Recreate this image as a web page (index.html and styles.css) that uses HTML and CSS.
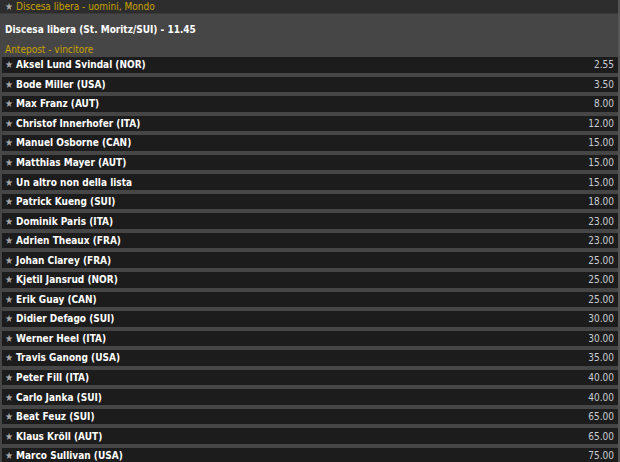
FILE: index.html
```html
<!DOCTYPE html>
<html lang="it">
<head>
<meta charset="utf-8">
<title>Discesa libera</title>
<link rel="stylesheet" href="styles.css">
</head>
<body>
<div class="page">
  <div class="crumb"><span class="star">★</span>Discesa libera - uomini, Mondo</div>
  <div class="event">Discesa libera (St. Moritz/SUI) - 11.45</div>
  <div class="market">Antepost - vincitore</div>
  <ul class="rows">
    <li class="row"><span class="name"><span class="star">★</span>Aksel Lund Svindal (NOR)</span><span class="odd">2.55</span></li>
    <li class="row"><span class="name"><span class="star">★</span>Bode Miller (USA)</span><span class="odd">3.50</span></li>
    <li class="row"><span class="name"><span class="star">★</span>Max Franz (AUT)</span><span class="odd">8.00</span></li>
    <li class="row"><span class="name"><span class="star">★</span>Christof Innerhofer (ITA)</span><span class="odd">12.00</span></li>
    <li class="row"><span class="name"><span class="star">★</span>Manuel Osborne (CAN)</span><span class="odd">15.00</span></li>
    <li class="row"><span class="name"><span class="star">★</span>Matthias Mayer (AUT)</span><span class="odd">15.00</span></li>
    <li class="row"><span class="name"><span class="star">★</span>Un altro non della lista</span><span class="odd">15.00</span></li>
    <li class="row"><span class="name"><span class="star">★</span>Patrick Kueng (SUI)</span><span class="odd">18.00</span></li>
    <li class="row"><span class="name"><span class="star">★</span>Dominik Paris (ITA)</span><span class="odd">23.00</span></li>
    <li class="row"><span class="name"><span class="star">★</span>Adrien Theaux (FRA)</span><span class="odd">23.00</span></li>
    <li class="row"><span class="name"><span class="star">★</span>Johan Clarey (FRA)</span><span class="odd">25.00</span></li>
    <li class="row"><span class="name"><span class="star">★</span>Kjetil Jansrud (NOR)</span><span class="odd">25.00</span></li>
    <li class="row"><span class="name"><span class="star">★</span>Erik Guay (CAN)</span><span class="odd">25.00</span></li>
    <li class="row"><span class="name"><span class="star">★</span>Didier Defago (SUI)</span><span class="odd">30.00</span></li>
    <li class="row"><span class="name"><span class="star">★</span>Werner Heel (ITA)</span><span class="odd">30.00</span></li>
    <li class="row"><span class="name"><span class="star">★</span>Travis Ganong (USA)</span><span class="odd">35.00</span></li>
    <li class="row"><span class="name"><span class="star">★</span>Peter Fill (ITA)</span><span class="odd">40.00</span></li>
    <li class="row"><span class="name"><span class="star">★</span>Carlo Janka (SUI)</span><span class="odd">40.00</span></li>
    <li class="row"><span class="name"><span class="star">★</span>Beat Feuz (SUI)</span><span class="odd">65.00</span></li>
    <li class="row"><span class="name"><span class="star">★</span>Klaus Kröll (AUT)</span><span class="odd">65.00</span></li>
    <li class="row"><span class="name"><span class="star">★</span>Marco Sullivan (USA)</span><span class="odd">75.00</span></li>
  </ul>
</div>
</body>
</html>
```
FILE: styles.css
```css
html, body {
  margin: 0;
  padding: 0;
  background: #464646;
  height: 100%;
  overflow: hidden;
}
.page {
  font-family: "DejaVu Sans Condensed", "DejaVu Sans", sans-serif;
  font-size: 10px;
  padding: 0 0 0 2px;
  border-right: 2px solid #555;
}
.crumb {
  height: 13px;
  line-height: 13px;
  background: #2d2d2d;
  color: #caa300;
  margin: 0 0 0 -2px;
  padding-left: 5px;
  border-bottom: 1px solid #3a3a3a;
}
.star {
  color: #a8a8a8;
  font-size: 10px;
  margin-right: 3px;
}
.event {
  color: #ffffff;
  font-weight: bold;
  padding: 9px 0 0 3px;
  height: 14px;
  line-height: 14px;
}
.market {
  color: #caa300;
  padding: 6px 0 0 3px;
  height: 14px;
  line-height: 14px;
}
.rows {
  list-style: none;
  margin: 0;
  padding: 0;
}
.row {
  display: flex;
  justify-content: space-between;
  align-items: center;
  height: 15.55px;
  margin-top: 4px;
  background: #1c1c1c;
  padding: 0 4px 0 3px;
}
.rows .row:first-child { margin-top: 0; }
.name {
  color: #ffffff;
  font-weight: bold;
}
.odd {
  color: #c9cdd2;
}
```
